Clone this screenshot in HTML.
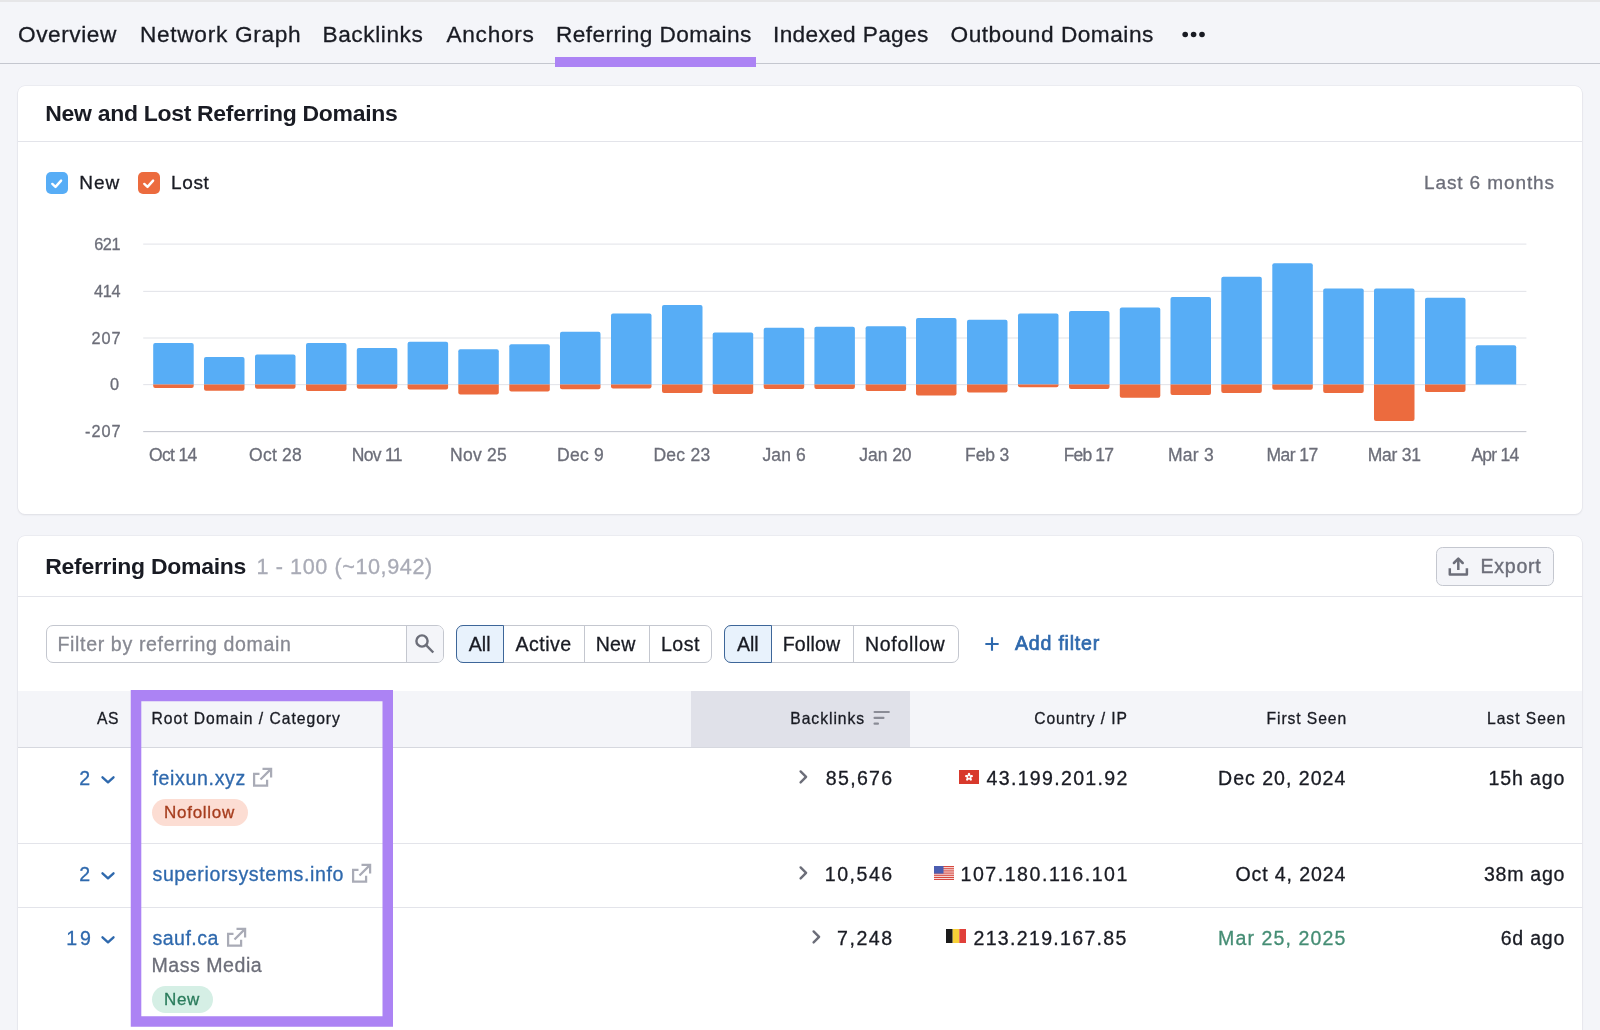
<!DOCTYPE html>
<html lang="en"><head><meta charset="utf-8"><title>Referring Domains</title>
<style>
html,body{margin:0;padding:0}
body{width:1600px;height:1030px;overflow:hidden;position:relative;background:#f4f5f9;font-family:"Liberation Sans",sans-serif;}
.abs{position:absolute}
.t{position:absolute;white-space:nowrap;line-height:1;margin:0;padding:0;border:0;background:none;font-family:inherit;font-weight:400;text-decoration:none;display:block}
.card{position:absolute;background:#fff;border-radius:7px;box-shadow:0 0 0 .6px #e2e3ea,0 1px 2px rgba(25,27,35,.10)}
.hr{position:absolute;height:1px;background:#e3e4ea}
.box{position:absolute;box-sizing:border-box;border:1px solid #c4c7cf;background:#fff}
#w{position:absolute;left:0;top:0;width:1600px;height:1030px;will-change:transform}
.t{-webkit-text-stroke:0.3px currentColor}
.t[style*="font-weight:700"]{-webkit-text-stroke:0}
</style></head><body><div id="w">
<div class="abs" style="left:0;top:0;width:1600px;height:1.500px;background:#e6e6e8"></div>
<div class="abs" style="left:0;top:63px;width:1600px;height:1px;background:#c4c7cf"></div>
<div class="abs" style="left:555px;top:56.800px;width:201.200px;height:10.600px;background:#ac83f4"></div>
<!-- dots -->
<svg class="abs" style="left:1180px;top:28px" width="28" height="12" viewBox="0 0 28 12"><circle cx="5.2" cy="6.5" r="2.800" fill="#191b23"/><circle cx="13.6" cy="6.5" r="2.800" fill="#191b23"/><circle cx="22" cy="6.5" r="2.800" fill="#191b23"/></svg>

<div class="card" style="left:17.700px;top:85.600px;width:1564.500px;height:428.200px"></div>
<div class="hr" style="left:18px;top:141px;width:1564px"></div>
<!-- legend checkboxes -->
<svg class="abs" style="left:46px;top:172px" width="22" height="22" viewBox="0 0 22 22"><rect width="22" height="22" rx="5" fill="#57adf6"/><path d="M6.300 11.900L9.500 14.900L15.100 8.600" fill="none" stroke="#fff" stroke-width="2.400" stroke-linecap="round" stroke-linejoin="round"/></svg>
<svg class="abs" style="left:137.5px;top:172px" width="22" height="22" viewBox="0 0 22 22"><rect width="22" height="22" rx="5" fill="#ec6b3e"/><path d="M6.300 11.900L9.500 14.900L15.100 8.600" fill="none" stroke="#fff" stroke-width="2.400" stroke-linecap="round" stroke-linejoin="round"/></svg>
<svg class="abs" style="left:0;top:0" width="1600" height="520" viewBox="0 0 1600 520">
<rect x="143.2" y="243.55" width="1383.2" height="1.1" fill="#e4e5ea"/>
<rect x="143.2" y="290.85" width="1383.2" height="1.1" fill="#e4e5ea"/>
<rect x="143.2" y="337.45" width="1383.2" height="1.1" fill="#e4e5ea"/>
<rect x="143.2" y="384.05" width="1383.2" height="1.1" fill="#e4e5ea"/>
<rect x="143.2" y="431.05" width="1383.2" height="1.1" fill="#c6c8d0"/>
<path d="M153.2 384.6V345.0a2 2 0 0 1 2 -2h36.5a2 2 0 0 1 2 2V384.6z" fill="#57adf6"/>
<path d="M153.2 384.6V386.0a2 2 0 0 0 2 2h36.5a2 2 0 0 0 2 -2V384.6z" fill="#ec6b3e"/>
<path d="M204.0 384.6V359.0a2 2 0 0 1 2 -2h36.5a2 2 0 0 1 2 2V384.6z" fill="#57adf6"/>
<path d="M204.0 384.6V388.7a2 2 0 0 0 2 2h36.5a2 2 0 0 0 2 -2V384.6z" fill="#ec6b3e"/>
<path d="M255.0 384.6V356.6a2 2 0 0 1 2 -2h36.5a2 2 0 0 1 2 2V384.6z" fill="#57adf6"/>
<path d="M255.0 384.6V386.7a2 2 0 0 0 2 2h36.5a2 2 0 0 0 2 -2V384.6z" fill="#ec6b3e"/>
<path d="M306.0 384.6V345.0a2 2 0 0 1 2 -2h36.5a2 2 0 0 1 2 2V384.6z" fill="#57adf6"/>
<path d="M306.0 384.6V389.0a2 2 0 0 0 2 2h36.5a2 2 0 0 0 2 -2V384.6z" fill="#ec6b3e"/>
<path d="M356.8 384.6V350.0a2 2 0 0 1 2 -2h36.5a2 2 0 0 1 2 2V384.6z" fill="#57adf6"/>
<path d="M356.8 384.6V386.7a2 2 0 0 0 2 2h36.5a2 2 0 0 0 2 -2V384.6z" fill="#ec6b3e"/>
<path d="M407.6 384.6V343.7a2 2 0 0 1 2 -2h36.5a2 2 0 0 1 2 2V384.6z" fill="#57adf6"/>
<path d="M407.6 384.6V387.4a2 2 0 0 0 2 2h36.5a2 2 0 0 0 2 -2V384.6z" fill="#ec6b3e"/>
<path d="M458.3 384.6V351.3a2 2 0 0 1 2 -2h36.5a2 2 0 0 1 2 2V384.6z" fill="#57adf6"/>
<path d="M458.3 384.6V392.5a2 2 0 0 0 2 2h36.5a2 2 0 0 0 2 -2V384.6z" fill="#ec6b3e"/>
<path d="M509.3 384.6V346.2a2 2 0 0 1 2 -2h36.5a2 2 0 0 1 2 2V384.6z" fill="#57adf6"/>
<path d="M509.3 384.6V389.6a2 2 0 0 0 2 2h36.5a2 2 0 0 0 2 -2V384.6z" fill="#ec6b3e"/>
<path d="M560.0 384.6V333.8a2 2 0 0 1 2 -2h36.5a2 2 0 0 1 2 2V384.6z" fill="#57adf6"/>
<path d="M560.0 384.6V387.3a2 2 0 0 0 2 2h36.5a2 2 0 0 0 2 -2V384.6z" fill="#ec6b3e"/>
<path d="M611.0 384.6V315.6a2 2 0 0 1 2 -2h36.5a2 2 0 0 1 2 2V384.6z" fill="#57adf6"/>
<path d="M611.0 384.6V386.6a2 2 0 0 0 2 2h36.5a2 2 0 0 0 2 -2V384.6z" fill="#ec6b3e"/>
<path d="M662.0 384.6V307.0a2 2 0 0 1 2 -2h36.5a2 2 0 0 1 2 2V384.6z" fill="#57adf6"/>
<path d="M662.0 384.6V391.1a2 2 0 0 0 2 2h36.5a2 2 0 0 0 2 -2V384.6z" fill="#ec6b3e"/>
<path d="M712.7 384.6V334.6a2 2 0 0 1 2 -2h36.5a2 2 0 0 1 2 2V384.6z" fill="#57adf6"/>
<path d="M712.7 384.6V391.9a2 2 0 0 0 2 2h36.5a2 2 0 0 0 2 -2V384.6z" fill="#ec6b3e"/>
<path d="M763.7 384.6V329.8a2 2 0 0 1 2 -2h36.5a2 2 0 0 1 2 2V384.6z" fill="#57adf6"/>
<path d="M763.7 384.6V387.1a2 2 0 0 0 2 2h36.5a2 2 0 0 0 2 -2V384.6z" fill="#ec6b3e"/>
<path d="M814.4 384.6V328.7a2 2 0 0 1 2 -2h36.5a2 2 0 0 1 2 2V384.6z" fill="#57adf6"/>
<path d="M814.4 384.6V387.1a2 2 0 0 0 2 2h36.5a2 2 0 0 0 2 -2V384.6z" fill="#ec6b3e"/>
<path d="M865.6 384.6V328.2a2 2 0 0 1 2 -2h36.5a2 2 0 0 1 2 2V384.6z" fill="#57adf6"/>
<path d="M865.6 384.6V389.1a2 2 0 0 0 2 2h36.5a2 2 0 0 0 2 -2V384.6z" fill="#ec6b3e"/>
<path d="M916.0 384.6V319.9a2 2 0 0 1 2 -2h36.5a2 2 0 0 1 2 2V384.6z" fill="#57adf6"/>
<path d="M916.0 384.6V393.6a2 2 0 0 0 2 2h36.5a2 2 0 0 0 2 -2V384.6z" fill="#ec6b3e"/>
<path d="M967.0 384.6V321.7a2 2 0 0 1 2 -2h36.5a2 2 0 0 1 2 2V384.6z" fill="#57adf6"/>
<path d="M967.0 384.6V390.6a2 2 0 0 0 2 2h36.5a2 2 0 0 0 2 -2V384.6z" fill="#ec6b3e"/>
<path d="M1018.0 384.6V315.6a2 2 0 0 1 2 -2h36.5a2 2 0 0 1 2 2V384.6z" fill="#57adf6"/>
<path d="M1018.0 384.6V385.3a2 2 0 0 0 2 2h36.5a2 2 0 0 0 2 -2V384.6z" fill="#ec6b3e"/>
<path d="M1069.0 384.6V312.9a2 2 0 0 1 2 -2h36.5a2 2 0 0 1 2 2V384.6z" fill="#57adf6"/>
<path d="M1069.0 384.6V387.1a2 2 0 0 0 2 2h36.5a2 2 0 0 0 2 -2V384.6z" fill="#ec6b3e"/>
<path d="M1119.8 384.6V309.6a2 2 0 0 1 2 -2h36.5a2 2 0 0 1 2 2V384.6z" fill="#57adf6"/>
<path d="M1119.8 384.6V395.7a2 2 0 0 0 2 2h36.5a2 2 0 0 0 2 -2V384.6z" fill="#ec6b3e"/>
<path d="M1170.5 384.6V299.0a2 2 0 0 1 2 -2h36.5a2 2 0 0 1 2 2V384.6z" fill="#57adf6"/>
<path d="M1170.5 384.6V392.9a2 2 0 0 0 2 2h36.5a2 2 0 0 0 2 -2V384.6z" fill="#ec6b3e"/>
<path d="M1221.3 384.6V278.8a2 2 0 0 1 2 -2h36.5a2 2 0 0 1 2 2V384.6z" fill="#57adf6"/>
<path d="M1221.3 384.6V390.9a2 2 0 0 0 2 2h36.5a2 2 0 0 0 2 -2V384.6z" fill="#ec6b3e"/>
<path d="M1272.3 384.6V265.2a2 2 0 0 1 2 -2h36.5a2 2 0 0 1 2 2V384.6z" fill="#57adf6"/>
<path d="M1272.3 384.6V387.8a2 2 0 0 0 2 2h36.5a2 2 0 0 0 2 -2V384.6z" fill="#ec6b3e"/>
<path d="M1323.2 384.6V290.6a2 2 0 0 1 2 -2h36.5a2 2 0 0 1 2 2V384.6z" fill="#57adf6"/>
<path d="M1323.2 384.6V390.9a2 2 0 0 0 2 2h36.5a2 2 0 0 0 2 -2V384.6z" fill="#ec6b3e"/>
<path d="M1374.0 384.6V290.6a2 2 0 0 1 2 -2h36.5a2 2 0 0 1 2 2V384.6z" fill="#57adf6"/>
<path d="M1374.0 384.6V419.1a2 2 0 0 0 2 2h36.5a2 2 0 0 0 2 -2V384.6z" fill="#ec6b3e"/>
<path d="M1425.0 384.6V299.7a2 2 0 0 1 2 -2h36.5a2 2 0 0 1 2 2V384.6z" fill="#57adf6"/>
<path d="M1425.0 384.6V389.9a2 2 0 0 0 2 2h36.5a2 2 0 0 0 2 -2V384.6z" fill="#ec6b3e"/>
<path d="M1475.7 384.6V347.2a2 2 0 0 1 2 -2h36.5a2 2 0 0 1 2 2V384.6z" fill="#57adf6"/>
</svg>

<div class="card" style="left:17.700px;top:536.200px;width:1564.500px;height:520px;border-radius:7px 7px 0 0"></div>
<div class="hr" style="left:18px;top:596px;width:1564px"></div>
<!-- export -->
<div class="box" style="left:1436.400px;top:547.200px;width:117.200px;height:38.400px;border-radius:6.500px;background:#f4f5f9"></div>
<svg class="abs" style="left:1446px;top:554px" width="24" height="24" viewBox="0 0 24 24" fill="none" stroke="#6c6e79" stroke-width="2.500" stroke-linejoin="round"><path d="M12.300 16V4.800" stroke-linecap="butt"/><path d="M7.900 9L12.300 4.600L16.700 9" stroke-linecap="round"/><path d="M3.800 14.200V20.600H20.900V14.200" stroke-linecap="butt"/></svg>
<!-- filter input -->
<div class="box" style="left:46px;top:625px;width:398px;height:38px;border-radius:7px"></div>
<div class="abs" style="left:406px;top:626px;width:37px;height:36px;background:#f4f5f9;border-left:1px solid #c4c7cf;border-radius:0 6px 6px 0;box-sizing:border-box"></div>
<svg class="abs" style="left:413px;top:632px" width="24" height="24" viewBox="0 0 24 24" fill="none" stroke="#6c6e79" stroke-width="2.400" stroke-linecap="butt"><circle cx="9" cy="9" r="5.600"/><path d="M13.100 13.100L20.300 20.500"/></svg>
<!-- group 1 -->
<div class="box" style="left:456px;top:625px;width:256px;height:38px;border-radius:7px"></div>
<div class="abs" style="left:584px;top:626px;width:1px;height:36px;background:#c4c7cf"></div>
<div class="abs" style="left:649px;top:626px;width:1px;height:36px;background:#c4c7cf"></div>
<div class="box" style="left:456px;top:625px;width:48px;height:38px;border-radius:7px 0 0 7px;border:1.5px solid #3d6699;background:#e8f2fc"></div>
<!-- group 2 -->
<div class="box" style="left:724px;top:625px;width:235px;height:38px;border-radius:7px"></div>
<div class="abs" style="left:853px;top:626px;width:1px;height:36px;background:#c4c7cf"></div>
<div class="box" style="left:724px;top:625px;width:48px;height:38px;border-radius:7px 0 0 7px;border:1.5px solid #3d6699;background:#e8f2fc"></div>
<!-- plus -->
<svg class="abs" style="left:984px;top:636.400px" width="16" height="16" viewBox="0 0 16 16" stroke="#2f69ad" stroke-width="2.100" stroke-linecap="butt"><path d="M8 1.350v13.300M1.350 8h13.300"/></svg>

<!-- table header -->
<div class="abs" style="left:18px;top:691px;width:1564px;height:56px;background:#f4f5f9"></div>
<div class="abs" style="left:690.5px;top:691px;width:219px;height:56px;background:#e0e1e9"></div>
<div class="hr" style="left:18px;top:747px;width:1564px;background:#d6d8df"></div>
<div class="hr" style="left:18px;top:843px;width:1564px"></div>
<div class="hr" style="left:18px;top:907px;width:1564px"></div>
<!-- sort icon -->
<svg class="abs" style="left:873px;top:710px" width="18" height="16" viewBox="0 0 18 16" fill="#8a8c96"><rect x="0.500" y="0.900" width="16.400" height="2.200" rx="1"/><rect x="0.500" y="6.800" width="11" height="2.200" rx="1"/><rect x="0.500" y="12.600" width="5.500" height="2.200" rx="1"/></svg>
<!-- badges -->
<div class="abs" style="left:152.200px;top:798.600px;width:95.600px;height:27px;border-radius:14px;background:#fcddd3"></div>
<div class="abs" style="left:152px;top:986px;width:61.300px;height:27px;border-radius:14px;background:#d5efe5"></div>
<!-- chevrons down -->
<svg class="abs" style="left:100px;top:773px" width="16" height="12" viewBox="0 0 16 12" fill="none" stroke="#2f69ad" stroke-width="2.400" stroke-linecap="round" stroke-linejoin="round"><path d="M2.500 4.300L8 9.300l5.500-5"/></svg>
<svg class="abs" style="left:100px;top:869px" width="16" height="12" viewBox="0 0 16 12" fill="none" stroke="#2f69ad" stroke-width="2.400" stroke-linecap="round" stroke-linejoin="round"><path d="M2.500 4.300L8 9.300l5.500-5"/></svg>
<svg class="abs" style="left:100px;top:933px" width="16" height="12" viewBox="0 0 16 12" fill="none" stroke="#2f69ad" stroke-width="2.400" stroke-linecap="round" stroke-linejoin="round"><path d="M2.500 4.300L8 9.300l5.500-5"/></svg>
<!-- chevrons right -->
<svg class="abs" style="left:797px;top:769px" width="12" height="16" viewBox="0 0 12 16" fill="none" stroke="#6c6e79" stroke-width="2.400" stroke-linecap="round" stroke-linejoin="round"><path d="M3.600 2.400L9.100 7.900l-5.500 5.500"/></svg>
<svg class="abs" style="left:797px;top:865px" width="12" height="16" viewBox="0 0 12 16" fill="none" stroke="#6c6e79" stroke-width="2.400" stroke-linecap="round" stroke-linejoin="round"><path d="M3.600 2.400L9.100 7.900l-5.500 5.500"/></svg>
<svg class="abs" style="left:810px;top:929px" width="12" height="16" viewBox="0 0 12 16" fill="none" stroke="#6c6e79" stroke-width="2.400" stroke-linecap="round" stroke-linejoin="round"><path d="M3.600 2.400L9.100 7.900l-5.500 5.500"/></svg>
<!-- external link icons -->
<svg class="abs ext" style="left:252px;top:766px" width="22" height="22" viewBox="0 0 22 22" fill="none" stroke="#a9abb6" stroke-width="2.250" stroke-linecap="butt" stroke-linejoin="miter"><path d="M7.500 7.800H2.100V19.700H15.100V13.800M10.500 2.900H19.100V11.500M19.100 2.900L8.500 13.500"/></svg>
<svg class="abs ext" style="left:351px;top:862px" width="22" height="22" viewBox="0 0 22 22" fill="none" stroke="#a9abb6" stroke-width="2.250" stroke-linecap="butt" stroke-linejoin="miter"><path d="M7.500 7.800H2.100V19.700H15.100V13.800M10.500 2.900H19.100V11.500M19.100 2.900L8.500 13.500"/></svg>
<svg class="abs ext" style="left:226px;top:926px" width="22" height="22" viewBox="0 0 22 22" fill="none" stroke="#a9abb6" stroke-width="2.250" stroke-linecap="butt" stroke-linejoin="miter"><path d="M7.500 7.800H2.100V19.700H15.100V13.800M10.500 2.900H19.100V11.500M19.100 2.900L8.500 13.500"/></svg>
<!-- flags -->
<svg class="abs" style="left:959px;top:770px" width="20" height="14" viewBox="0 0 20 14"><rect width="20" height="14" fill="#d8392c"/><g fill="#fff" transform="translate(10 7)"><ellipse cx="0" cy="-2.200" rx="1.300" ry="2"/><ellipse cx="0" cy="-2.200" rx="1.300" ry="2" transform="rotate(72)"/><ellipse cx="0" cy="-2.200" rx="1.300" ry="2" transform="rotate(144)"/><ellipse cx="0" cy="-2.200" rx="1.300" ry="2" transform="rotate(216)"/><ellipse cx="0" cy="-2.200" rx="1.300" ry="2" transform="rotate(288)"/></g><circle cx="10" cy="7" r="0.900" fill="#d8392c"/></svg>
<svg class="abs" style="left:934px;top:865.500px" width="20" height="14" viewBox="0 0 20 14"><rect width="20" height="14" fill="#fff"/><g fill="#d6483f"><rect y="0" width="20" height="1.250"/><rect y="2.150" width="20" height="1.250"/><rect y="4.300" width="20" height="1.250"/><rect y="6.450" width="20" height="1.250"/><rect y="8.600" width="20" height="1.250"/><rect y="10.750" width="20" height="1.250"/><rect y="12.800" width="20" height="1.200"/></g><rect width="9.500" height="7.600" fill="#4b5db0"/></svg>
<svg class="abs" style="left:946px;top:929px" width="20" height="14" viewBox="0 0 20 14"><rect width="6.700" height="14" fill="#1b1b1b"/><rect x="6.700" width="6.600" height="14" fill="#f7d037"/><rect x="13.300" width="6.700" height="14" fill="#e0403a"/></svg>
<a class="t" style="left:18.00px;top:22.82px;font-size:22.66px;letter-spacing:0.563px;color:#191b23;">Overview</a>
<a class="t" style="left:140.00px;top:22.82px;font-size:22.66px;letter-spacing:0.687px;color:#191b23;">Network Graph</a>
<a class="t" style="left:322.50px;top:22.82px;font-size:22.66px;letter-spacing:0.580px;color:#191b23;">Backlinks</a>
<a class="t" style="left:446.50px;top:22.82px;font-size:22.66px;letter-spacing:0.702px;color:#191b23;">Anchors</a>
<a class="t" style="left:556.00px;top:22.82px;font-size:22.66px;letter-spacing:0.403px;color:#191b23;">Referring Domains</a>
<a class="t" style="left:773.00px;top:22.82px;font-size:22.66px;letter-spacing:0.347px;color:#191b23;">Indexed Pages</a>
<a class="t" style="left:950.50px;top:22.82px;font-size:22.66px;letter-spacing:0.508px;color:#191b23;">Outbound Domains</a>
<h2 class="t" style="left:45.30px;top:101.56px;font-size:22.97px;letter-spacing:-0.300px;color:#191b23;font-weight:700;">New and Lost Referring Domains</h2>
<span class="t" style="left:79.25px;top:173.27px;font-size:19.05px;letter-spacing:1.011px;color:#191b23;">New</span>
<span class="t" style="left:171.00px;top:173.27px;font-size:19.05px;letter-spacing:0.639px;color:#191b23;">Lost</span>
<span class="t" style="left:1424.00px;top:173.27px;font-size:19.05px;letter-spacing:0.873px;color:#6c6e79;">Last 6 months</span>
<span class="t" style="left:94.30px;top:235.63px;font-size:16.27px;letter-spacing:-0.496px;color:#6c6e79;">621</span>
<span class="t" style="left:94.00px;top:282.63px;font-size:16.27px;letter-spacing:-0.346px;color:#6c6e79;">414</span>
<span class="t" style="left:91.50px;top:329.63px;font-size:16.27px;letter-spacing:0.904px;color:#6c6e79;">207</span>
<span class="t" style="left:110.00px;top:376.13px;font-size:16.27px;letter-spacing:0.000px;color:#6c6e79;">0</span>
<span class="t" style="left:85.00px;top:423.13px;font-size:16.27px;letter-spacing:0.964px;color:#6c6e79;">-207</span>
<span class="t" style="left:148.90px;top:447.18px;font-size:17.51px;letter-spacing:-0.624px;color:#6c6e79;">Oct 14</span>
<span class="t" style="left:249.10px;top:447.18px;font-size:17.51px;letter-spacing:0.236px;color:#6c6e79;">Oct 28</span>
<span class="t" style="left:351.80px;top:447.18px;font-size:17.51px;letter-spacing:-0.683px;color:#6c6e79;">Nov 11</span>
<span class="t" style="left:450.00px;top:447.18px;font-size:17.51px;letter-spacing:0.257px;color:#6c6e79;">Nov 25</span>
<span class="t" style="left:557.00px;top:447.18px;font-size:17.51px;letter-spacing:0.254px;color:#6c6e79;">Dec 9</span>
<span class="t" style="left:653.40px;top:447.18px;font-size:17.51px;letter-spacing:0.277px;color:#6c6e79;">Dec 23</span>
<span class="t" style="left:762.50px;top:447.18px;font-size:17.51px;letter-spacing:0.081px;color:#6c6e79;">Jan 6</span>
<span class="t" style="left:859.30px;top:447.18px;font-size:17.51px;letter-spacing:-0.062px;color:#6c6e79;">Jan 20</span>
<span class="t" style="left:965.10px;top:447.18px;font-size:17.51px;letter-spacing:-0.154px;color:#6c6e79;">Feb 3</span>
<span class="t" style="left:1063.80px;top:447.18px;font-size:17.51px;letter-spacing:-0.870px;color:#6c6e79;">Feb 17</span>
<span class="t" style="left:1168.00px;top:447.18px;font-size:17.51px;letter-spacing:0.225px;color:#6c6e79;">Mar 3</span>
<span class="t" style="left:1266.50px;top:447.18px;font-size:17.51px;letter-spacing:-0.567px;color:#6c6e79;">Mar 17</span>
<span class="t" style="left:1367.70px;top:447.18px;font-size:17.51px;letter-spacing:-0.247px;color:#6c6e79;">Mar 31</span>
<span class="t" style="left:1471.40px;top:447.18px;font-size:17.51px;letter-spacing:-0.725px;color:#6c6e79;">Apr 14</span>
<h2 class="t" style="left:45.30px;top:554.56px;font-size:22.97px;letter-spacing:-0.282px;color:#191b23;font-weight:700;">Referring Domains</h2>
<span class="t" style="left:256.50px;top:555.69px;font-size:21.63px;letter-spacing:0.575px;color:#a9abb6;">1 - 100 (~10,942)</span>
<button class="t" style="left:1480.50px;top:556.73px;font-size:19.57px;letter-spacing:0.739px;color:#6c6e79;-webkit-text-stroke:0.4px #6c6e79;">Export</button>
<span class="t" style="left:57.50px;top:635.43px;font-size:19.57px;letter-spacing:0.638px;color:#878992;">Filter by referring domain</span>
<button class="t" style="left:468.75px;top:635.43px;font-size:19.57px;letter-spacing:0.053px;color:#191b23;">All</button>
<button class="t" style="left:515.50px;top:635.43px;font-size:19.57px;letter-spacing:0.472px;color:#191b23;">Active</button>
<button class="t" style="left:595.75px;top:635.43px;font-size:19.57px;letter-spacing:0.246px;color:#191b23;">New</button>
<button class="t" style="left:661.00px;top:635.43px;font-size:19.57px;letter-spacing:0.486px;color:#191b23;">Lost</button>
<button class="t" style="left:737.00px;top:635.43px;font-size:19.57px;letter-spacing:-0.072px;color:#191b23;">All</button>
<button class="t" style="left:782.75px;top:635.43px;font-size:19.57px;letter-spacing:0.170px;color:#191b23;">Follow</button>
<button class="t" style="left:865.00px;top:635.43px;font-size:19.57px;letter-spacing:0.658px;color:#191b23;">Nofollow</button>
<button class="t" style="left:1015.00px;top:634.43px;font-size:19.57px;letter-spacing:0.785px;color:#2f69ad;-webkit-text-stroke:0.7px #2f69ad;">Add filter</button>
<b class="t" style="left:97.00px;top:711.04px;font-size:15.66px;letter-spacing:0.557px;color:#191b23;">AS</b>
<b class="t" style="left:151.50px;top:711.04px;font-size:15.66px;letter-spacing:0.971px;color:#191b23;">Root Domain / Category</b>
<b class="t" style="left:790.30px;top:711.04px;font-size:15.66px;letter-spacing:0.963px;color:#191b23;">Backlinks</b>
<b class="t" style="left:1034.20px;top:711.04px;font-size:15.66px;letter-spacing:0.916px;color:#191b23;">Country / IP</b>
<b class="t" style="left:1266.50px;top:711.04px;font-size:15.66px;letter-spacing:0.929px;color:#191b23;">First Seen</b>
<b class="t" style="left:1487.00px;top:711.04px;font-size:15.66px;letter-spacing:0.963px;color:#191b23;">Last Seen</b>
<span class="t" style="left:79.20px;top:769.43px;font-size:19.57px;letter-spacing:0.000px;color:#2f69ad;">2</span>
<a class="t" style="left:152.50px;top:769.43px;font-size:19.57px;letter-spacing:0.645px;color:#2f69ad;">feixun.xyz</a>
<span class="t" style="left:825.80px;top:769.43px;font-size:19.57px;letter-spacing:1.309px;color:#191b23;">85,676</span>
<span class="t" style="left:986.50px;top:769.43px;font-size:19.57px;letter-spacing:1.315px;color:#191b23;">43.199.201.92</span>
<span class="t" style="left:1218.00px;top:769.43px;font-size:19.57px;letter-spacing:1.001px;color:#191b23;">Dec 20, 2024</span>
<span class="t" style="left:1488.50px;top:769.43px;font-size:19.57px;letter-spacing:0.861px;color:#191b23;">15h ago</span>
<span class="t" style="left:79.20px;top:865.43px;font-size:19.57px;letter-spacing:0.000px;color:#2f69ad;">2</span>
<a class="t" style="left:152.50px;top:865.43px;font-size:19.57px;letter-spacing:0.605px;color:#2f69ad;">superiorsystems.info</a>
<span class="t" style="left:824.80px;top:865.43px;font-size:19.57px;letter-spacing:1.509px;color:#191b23;">10,546</span>
<span class="t" style="left:960.50px;top:865.43px;font-size:19.57px;letter-spacing:1.534px;color:#191b23;">107.180.116.101</span>
<span class="t" style="left:1235.50px;top:865.43px;font-size:19.57px;letter-spacing:0.874px;color:#191b23;">Oct 4, 2024</span>
<span class="t" style="left:1484.00px;top:865.43px;font-size:19.57px;letter-spacing:0.708px;color:#191b23;">38m ago</span>
<span class="t" style="left:66.30px;top:929.13px;font-size:19.57px;letter-spacing:2.820px;color:#2f69ad;">19</span>
<a class="t" style="left:152.50px;top:929.13px;font-size:19.57px;letter-spacing:0.468px;color:#2f69ad;">sauf.ca</a>
<span class="t" style="left:837.00px;top:929.13px;font-size:19.57px;letter-spacing:1.556px;color:#191b23;">7,248</span>
<span class="t" style="left:973.50px;top:929.13px;font-size:19.57px;letter-spacing:1.300px;color:#191b23;">213.219.167.85</span>
<span class="t" style="left:1218.00px;top:929.13px;font-size:19.57px;letter-spacing:1.101px;color:#458d74;">Mar 25, 2025</span>
<span class="t" style="left:1500.70px;top:929.13px;font-size:19.57px;letter-spacing:0.769px;color:#191b23;">6d ago</span>
<span class="t" style="left:164.00px;top:803.81px;font-size:17.0px;letter-spacing:0.726px;color:#a63d1e;-webkit-text-stroke:0.3px #a63d1e;">Nofollow</span>
<span class="t" style="left:151.50px;top:956.43px;font-size:19.57px;letter-spacing:0.520px;color:#6c6e79;">Mass Media</span>
<span class="t" style="left:164.00px;top:991.11px;font-size:17.0px;letter-spacing:0.634px;color:#2a7c5c;-webkit-text-stroke:0.3px #2a7c5c;">New</span>
<!-- purple box -->
<svg class="abs" style="left:120px;top:680px" width="290" height="350" viewBox="120 680 290 350"><path fill="#ac83f4" fill-rule="evenodd" d="M130.750 690H393V1026.750H130.750zM141.300 701.200V1016.200H382.500V701.200z"/></svg>
</div></body></html>
